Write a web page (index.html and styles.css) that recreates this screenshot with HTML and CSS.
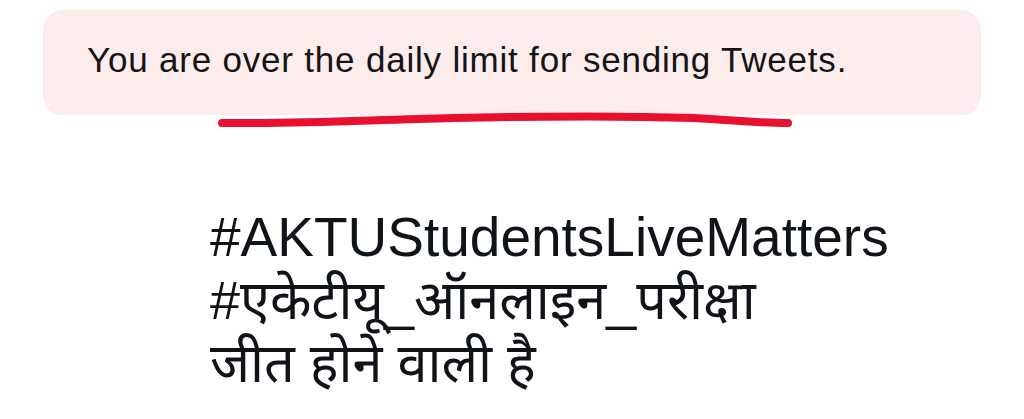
FILE: index.html
```html
<!DOCTYPE html>
<html lang="en">
<head>
<meta charset="utf-8">
<title>Daily limit</title>
<link rel="stylesheet" href="styles.css">
</head>
<body>
  <div class="alert">
    <p class="alert-text">You are over the daily limit for sending Tweets.</p>
  </div>
  <svg class="scribble" width="580" height="16" viewBox="0 0 580 16" aria-hidden="true">
    <path d="M8 8 C90 9 150 5 240 3 C330 1 420 1 480 3 C520 5 540 8 574 8" fill="none" stroke="#e8102c" stroke-width="8" stroke-linecap="round"/>
  </svg>
  <div class="tweet">
    <div class="line">#AKTUStudentsLiveMatters</div>
    <div class="line hi" lang="hi">#एकेटीयू_ऑनलाइन_परीक्षा</div>
    <div class="line hi" lang="hi">जीत होने वाली है</div>
  </div>
</body>
</html>
```
FILE: styles.css
```css
html, body {
  margin: 0;
  padding: 0;
  background: #ffffff;
}
body {
  width: 1024px;
  height: 419px;
  overflow: hidden;
  font-family: "Liberation Sans", "Noto Sans Devanagari", "Lohit Devanagari", "FreeSans", "Noto Sans", sans-serif;
  color: #111111;
}
.alert {
  margin: 10px 43px 0 43px;
  height: 105px;
  box-sizing: border-box;
  padding: 31px 44px 0 44px;
  background: #fcecec;
  border-radius: 20px;
}
.alert-text {
  margin: 0;
  font-size: 35px;
  line-height: 38px;
  letter-spacing: 0.8px;
  color: #141414;
  white-space: nowrap;
}
.scribble {
  display: block;
  margin-left: 214px;
  overflow: visible;
}
.tweet {
  margin-top: 75px;
  padding-left: 210px;
}
.line {
  height: 63px;
  font-size: 55px;
  line-height: 63px;
  white-space: nowrap;
  color: #0f1419;
}
.hi {
  font-size: 54px;
}
```
